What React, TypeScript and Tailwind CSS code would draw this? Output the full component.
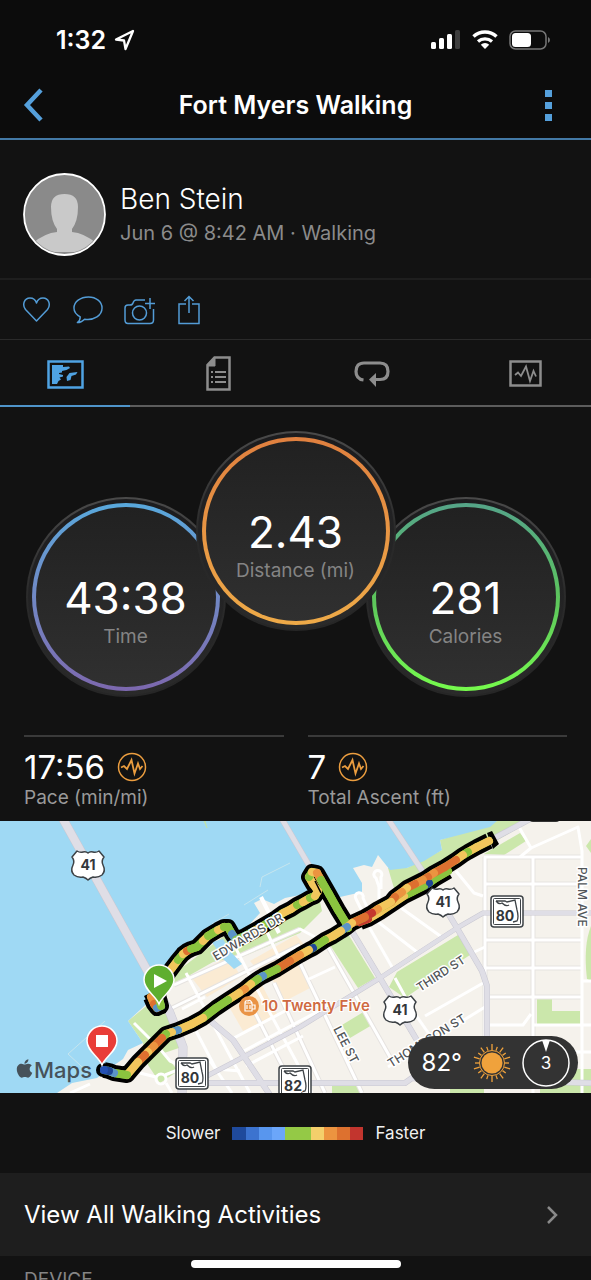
import type { ReactNode } from 'react'
import { FaApple } from 'react-icons/fa'

type SpeedKey = 'n' | 'b' | 'l' | 'g' | 'y' | 'o' | 'd' | 'r'

const SPEED: Record<SpeedKey, string> = {
  n: '#1f4696',
  b: '#3c73cf',
  l: '#5b94c8',
  g: '#8bc43f',
  y: '#f2c65c',
  o: '#ec9440',
  d: '#dd7030',
  r: '#c5382e',
}

const LEGEND = [
  'bg-[#1f4a9c]',
  'bg-[#3c73cf]',
  'bg-[#5896ee]',
  'bg-[#6ba6fa]',
  'bg-[#94c946]',
  'bg-[#94c946]',
  'bg-[#f4cf6b]',
  'bg-[#ec9440]',
  'bg-[#dd712f]',
  'bg-[#c2352e]',
]

// Each point starts a segment drawn in its own speed colour
type TrackPoint = [number, number, SpeedKey]

const TRACK_SHORE: TrackPoint[] = [
  [151, 176, 'o'], [154, 183, 'd'], [157, 187, 'l'], [161, 185, 'g'], [158, 174, 'y'],
  [164, 158, 'y'], [172, 147, 'y'], [178, 139, 'g'], [183, 133, 'y'], [187, 130, 'd'],
  [191, 128, 'g'], [197, 126, 'g'], [203, 120, 'y'], [208, 115, 'g'], [213, 112, 'g'],
  [218, 109, 'y'], [224, 106, 'g'], [228, 106, 'g'], [232, 113, 'l'], [236, 119, 'g'],
  [245, 115, 'g'], [254, 110, 'y'], [261, 106, 'g'], [276, 97, 'g'], [283, 92, 'y'],
  [291, 88, 'y'], [297, 84, 'g'], [303, 81, 'y'], [310, 77, 'g'], [315, 75, 'y'],
  [318, 70, 'y'], [313, 63, 'y'], [309, 56, 'g'], [312, 51, 'y'], [317, 52, 'o'],
  [321, 59, 'g'], [329, 73, 'g'], [338, 89, 'g'], [346, 102, 'g'], [348, 107, 'g'],
]

const TRACK_MAIN: TrackPoint[] = [
  [489, 20, 'y'], [477, 26, 'y'], [468, 31, 'g'], [463, 34, 'y'], [456, 39, 'd'],
  [445, 46, 'd'], [434, 52, 'o'], [428, 56, 'd'], [423, 59, 'o'], [415, 63, 'd'],
  [407, 67, 'y'], [402, 71, 'o'], [395, 76, 'd'], [391, 81, 'y'], [378, 88, 'o'],
  [372, 92, 'r'], [365, 96, 'd'], [352, 102, 'y'], [347, 106, 'l'], [341, 110, 'y'],
  [333, 115, 'y'], [325, 119, 'g'], [313, 127, 'n'], [309, 129, 'y'], [300, 134, 'o'],
  [290, 140, 'd'], [277, 148, 'g'], [263, 155, 'l'], [258, 158, 'g'], [251, 163, 'y'],
  [245, 168, 'o'], [239, 172, 'y'], [228, 179, 'g'], [216, 187, 'g'], [203, 197, 'y'],
  [192, 203, 'y'], [178, 209, 'l'], [172, 211, 'y'], [166, 213, 'g'], [162, 217, 'd'],
  [154, 225, 'o'], [148, 231, 'y'], [145, 234, 'd'], [138, 241, 'y'], [127, 254, 'g'],
  [114, 252, 'l'], [109, 250, 'n'], [104, 249, 'n'],
]

// Return leg that runs beside the main one for a few blocks
const TRACK_RETURN: TrackPoint[] = [
  [448, 50, 'g'], [436, 57, 'g'], [429, 62, 'n'], [424, 65, 'g'], [412, 71, 'g'],
  [404, 75, 'y'], [392, 83, 'y'], [380, 91, 'y'], [368, 98, 'r'], [360, 101, 'd'],
]

function Track({ points }: { points: TrackPoint[] }) {
  const line = points.map(([x, y]) => `${x},${y}`).join(' ')
  return (
    <g fill="none" strokeLinejoin="round">
      <polyline points={line} stroke={SPEED.g} strokeWidth="8" strokeLinecap="round" />
      {points.slice(0, -1).map(([x, y, key], i) => (
        <line
          key={i}
          x1={x}
          y1={y}
          x2={points[i + 1][0]}
          y2={points[i + 1][1]}
          stroke={SPEED[key]}
          strokeWidth="8"
          strokeLinecap="round"
        />
      ))}
    </g>
  )
}

function TrackCasing({ points }: { points: TrackPoint[] }) {
  return (
    <polyline
      points={points.map(([x, y]) => `${x},${y}`).join(' ')}
      fill="none"
      stroke="#000"
      strokeWidth="16"
      strokeLinejoin="round"
      strokeLinecap="butt"
    />
  )
}

function UsShield({ x, y }: { x: number; y: number }) {
  return (
    <g transform={`translate(${x} ${y})`}>
      <path
        d="M-11-14 Q-8-12-5-13 Q-2-14 0-12 Q2-14 5-13 Q8-12 11-14 L16-8 Q13-4 15 0 Q18 6 14 10 Q10 13 5 12 Q2 13 0 15 Q-2 13-5 12 Q-10 13-14 10 Q-18 6-15 0 Q-13-4-16-8 Z"
        fill="#fff"
        stroke="#3d4246"
        strokeWidth="1.5"
        strokeLinejoin="round"
      />
      <text y="5" textAnchor="middle" fontSize="14" fontWeight="700" fill="#33373a">
        41
      </text>
    </g>
  )
}

function StateShield({ x, y, label }: { x: number; y: number; label: string }) {
  return (
    <g transform={`translate(${x} ${y})`}>
      <rect x="-16" y="-15" width="32" height="31" rx="3" fill="#fff" stroke="#3d4246" strokeWidth="1.5" />
      <rect x="-13.500" y="-12.500" width="27" height="26" rx="1" fill="none" stroke="#3d4246" />
      <path d="M-11-10 H-2 L0-9 L8-11 L10-1 Q12 6 10 10 L6 11 M-11-10 Q-8-6-5-8 Q-1-4 2-6" fill="none" stroke="#3d4246" strokeWidth="1.3" />
      <text x="-2" y="10" textAnchor="middle" fontSize="14" fontWeight="700" fill="#33373a" stroke="#fff" strokeWidth="2" paintOrder="stroke">
        {label}
      </text>
    </g>
  )
}

function Pin({ x, y, color, children }: { x: number; y: number; color: string; children: ReactNode }) {
  return (
    <g transform={`translate(${x} ${y})`}>
      <path
        d="M0 23 C-3 15-15 9-15-1 A15 15 0 0 1 15-1 C15 9 3 15 0 23 Z"
        fill={color}
        stroke="#fff"
        strokeWidth="1.5"
      />
      {children}
    </g>
  )
}

function RouteMap() {
  return (
    <svg viewBox="0 0 591 272" preserveAspectRatio="xMidYMid slice" className="block h-full w-full" role="img" aria-label="Route map">
      <rect width="591" height="272" fill="#f5f2ec" />

      {/* Built-up blocks */}
      <g fill="#fbebd3">
        <path d="M191 156 L229 135 L241 156 L207 176 Z" />
        <path d="M250 140 L296 114 L308 128 L262 154 Z" />
        <path d="M228 184 L262 164 L277 193 L243 210 Z" />
        <path d="M272 158 L300 142 L312 166 L285 180 Z" />
      </g>

      {/* Parks */}
      <g fill="#cbe7ab">
        <path d="M497 0 L440 19 L442 29 L407 47 L388 47 L396 74 L489 24 L530 0 Z" />
        <path d="M484 33 L520 12 L526 20 L504 34 Z" />
        <path d="M167 158 L228 112 L300 84 L318 72 L322 90 L300 112 L247 134 L213 141 L176 162 Z" />
        <path d="M128 200 L150 182 L172 196 L182 226 L164 232 L178 250 L160 262 L148 244 L143 222 Z" />
        <path d="M330 124 L348 113 L375 157 L358 167 Z" />
        <path d="M397 151 L458 114 L473 132 L418 168 L405 177 L389 166 Z" />
        <path d="M342 204 L365 190 L372 204 L350 217 Z" />
        <path d="M537 178 H552 V190 H580 V203 H537 Z" />
        <path d="M586 25 L591 18 V32 Z" />
        <path d="M591 105 Q583 125 587 158 L591 160 Z" />
        <path d="M332 264 H361 V272 H332 Z M450 264 H484 V272 H450 Z M540 248 H591 V272 H540 Z" />
      </g>

      {/* River */}
      <path
        d="M0 0 H497 L490 6 L440 19 L442 29 L424 40 L407 47 L390 49 L378 34 L372 46 L364 44 L353 47 L362 62 L362 71 L340 76 L322 72 L300 74 L285 77 L274 83 L262 78 L254 82 L260 92 L238 116 L226 102 L196 122 L167 146 L152 178 L128 200 L143 222 L128 229 L123 238 L113 245 L97 257 L72 262 L57 272 H0 Z"
        fill="#9fd9f4"
      />
      <path d="M204 0 L207 7 L205 0 Z" fill="#cbe7ab" stroke="#bfe2b0" />
      <path d="M212 103 L229 93 M244 84 L268 69 M262 56 L290 42 M105 200 L68 233 L92 255 M262 56 L260 66" fill="none" stroke="#c6e5ee" strokeWidth="1" />
      <path d="M261 76 L279 112" fill="none" stroke="#fff" strokeWidth="4" />

      {/* Side streets */}
      <g fill="none" stroke="#e6e3e0" strokeWidth="5" strokeLinejoin="round">
        <path d="M174 164 L300 108 M172 187 L300 124 M485 36 V216 M533 36 V264 M484 36 H582 M484 63 H582 M485 119 H582 M485 147 H582 M490 176 H582" />
        <path d="M248 178 L296 272 M274 162 L325 272 M300 142 L362 272 M328 126 L390 236" />
      </g>
      <g fill="none" stroke="#fff" strokeWidth="3" strokeLinejoin="round">
        <path d="M174 164 L300 108 L315 116 M172 187 L300 124 M186 152 L222 220 L250 272 M232 120 L250 155 L296 240 L312 272 M262 100 L285 150 M205 176 L182 188" />
        <path d="M248 178 L296 272 M274 162 L325 272 M300 142 L362 272 M328 126 L390 236" />
        <path d="M373 97 L417 131 M397 84 L443 117 M232 218 L300 182 M240 232 L330 184 M246 245 L303 215" />
        <path d="M368 104 L392 146 M395 157 L413 190 L445 236 M309 158 L335 146 M472 132 L485 126 M425 195 L485 161 M388 246 L485 186" />
        <path d="M381 68 V56 A4 4 0 1 0 376 57 L379 66 V78 M366 98 L356 78 A4 4 0 1 1 363 77 L367 86" />
        <path d="M456 50 L474 72 L483 75 M484 36 H582 M484 63 H582 M485 119 H582 M485 147 H582 M490 176 H582 M490 204 H523 L531 193" />
        <path d="M485 36 V216 M533 36 V272 M519 6 L531 27 L578 6 L582 30 V272 M531 27 L520 36 M533 204 H591 M582 160 H591 M555 231 H591" />
        <path d="M134 202 L160 228 L170 240 L182 245 M140 252 L156 256 M166 262 L172 272 M165 254 L180 248 M70 272 L90 263" />
        <circle cx="161" cy="258" r="5" />
        <path d="M210 240 L232 272 M186 236 L206 262 M196 210 L216 248 L240 250" />
      </g>
      <path d="M212 121 L223 118 L231 131 L242 143 L234 148 L222 137 Z" fill="#9fd9f4" />

      {/* Main roads */}
      <g fill="none" stroke="#c9c8d2" strokeLinejoin="round">
        <path d="M63 -2 L147 149 L170 192 L183 226 L182 274" strokeWidth="9" />
        <path d="M282 -2 L310 46 L350 107 L380 157 L418 221 L428 240" strokeWidth="6" />
        <path d="M388 -2 L423 51 L457 107 L482 150 L487 165 V240" strokeWidth="6" />
        <path d="M182 268 L230 243 L300 206 L380 157 L457 107 L483 92 H591" strokeWidth="5" />
        <path d="M207 197 L233 219 L270 274 M185 262 H405 L412 257 L591 262" strokeWidth="6" />
        <path d="M489 20 L530 -2" strokeWidth="6" />
      </g>
      <g fill="none" stroke="#dfdee6" strokeLinejoin="round">
        <path d="M63 -2 L147 149 L170 192 L183 226 L182 274" strokeWidth="8" />
        <path d="M282 -2 L310 46 L350 107 L380 157 L418 221 L428 240" strokeWidth="5" />
        <path d="M388 -2 L423 51 L457 107 L482 150 L487 165 V240" strokeWidth="5" />
        <path d="M182 268 L230 243 L300 206 L380 157 L457 107 L483 92 H591" strokeWidth="4" />
        <path d="M207 197 L233 219 L270 274 M185 262 H405 L412 257 L591 262" strokeWidth="5" />
        <path d="M489 20 L530 -2" strokeWidth="5" />
      </g>

      <TrackCasing points={TRACK_SHORE} />
      <TrackCasing points={TRACK_MAIN} />
      <TrackCasing points={TRACK_RETURN} />
      <path d="M487 12 L492 10 L499 23 L493 28 Z" />
      <path d="M144 175 L150 172 L158 174 L158 182 L166 183 L166 192 L154 195 Z" />
      <circle cx="103" cy="249" r="7" />
      <Track points={TRACK_RETURN} />
      <Track points={TRACK_SHORE} />
      <Track points={TRACK_MAIN} />
      <circle cx="429" cy="62" r="3" fill={SPEED.n} />
      <path d="M315 60 L321 72" stroke="#000" strokeWidth="1.5" />
      <circle cx="104" cy="249" r="4" fill="#2450b4" />

      {/* Street names */}
      <g fontSize="12" fill="#515558" stroke="#fff" strokeWidth="3" paintOrder="stroke" strokeLinejoin="round" fontWeight="500">
        <text transform="translate(216 140) rotate(-31)">EDWARDS DR</text>
        <text transform="translate(420 171) rotate(-33)">THIRD ST</text>
        <text transform="translate(391 247) rotate(-32)">THOMPSON ST</text>
        <text transform="translate(333 208) rotate(62)">LEE ST</text>
        <text transform="translate(578 46) rotate(90)">PALM AVE</text>
      </g>

      <UsShield x={88} y={44} />
      <UsShield x={443} y={81} />
      <UsShield x={400} y={189} />
      <StateShield x={507} y={90} label="80" />
      <StateShield x={192} y={252} label="80" />
      <StateShield x={295} y={260} label="82" />

      {/* Point of interest */}
      <circle cx="249" cy="185" r="10" fill="#e99345" />
      <path d="M245 182 h7 v8 h-7 Z M252 184 h3 v4 h-3 M245 182 q0-3 3-2 q2-2 4 2 M247 184 v4 M250 184 v4" fill="none" stroke="#fff" strokeWidth="1.2" />
      <text x="262" y="190" fontSize="15" fontWeight="600" fill="#cf6a42" stroke="#fff" strokeWidth="2" paintOrder="stroke">
        10 Twenty Five
      </text>

      <Pin x={159} y={160} color="#5fae2f">
        <path d="M-5-7 L8 0 L-5 7 Z" fill="#fff" />
      </Pin>
      <Pin x={102} y={221} color="#e93d38">
        <rect x="-6" y="-7" width="12" height="12" fill="#fff" />
      </Pin>

      <FaApple x="14" y="237" size={21} color="#46525a" />
      <text x="34" y="257" fontSize="22" fontWeight="500" fill="#46525a">
        Maps
      </text>
      <rect x="529" y="-8" width="31" height="9" rx="4" fill="#333" />
    </svg>
  )
}

function PulseIcon() {
  return (
    <svg width="30" height="30" viewBox="0 0 30 30" fill="none" stroke="#eb9d3f" aria-hidden="true">
      <circle cx="15" cy="15" r="13.500" strokeWidth="1.500" />
      <path d="M4 15.500 L7 14 L10 17 L14.500 8 L17.500 21.500 L21 11.500 L23 17 L25.500 14" strokeWidth="1.800" />
    </svg>
  )
}

function StatusBar() {
  return (
    <div className="flex h-[70px] items-center justify-between pt-[10px] pr-10 pl-14 text-white">
      <div className="flex items-center gap-2">
        <span className="text-[25px] leading-8 font-semibold">1:32</span>
        <svg width="21" height="22" viewBox="0 0 21 22" fill="none" aria-hidden="true">
          <path d="M19 2 L2 10.500 L10 11.500 L11.500 20 Z" stroke="#fff" strokeWidth="2.300" strokeLinejoin="round" />
        </svg>
      </div>
      <div className="flex items-center gap-[11px]">
        <svg width="30" height="20" viewBox="0 0 30 20" fill="#fff" aria-hidden="true">
          <rect x="0" y="12" width="5" height="7" rx="1.500" />
          <rect x="8" y="8" width="5" height="11" rx="1.500" />
          <rect x="16" y="4" width="5" height="15" rx="1.500" />
          <rect x="24" y="0" width="5" height="19" rx="1.500" fill="#3d3d3d" />
        </svg>
        <svg width="26" height="20" viewBox="0 0 26 20" fill="none" stroke="#fff" aria-hidden="true">
          <path d="M1.500 6.500 A17 17 0 0 1 24.500 6.500" strokeWidth="3.500" />
          <path d="M6 11.500 A10.500 10.500 0 0 1 20 11.500" strokeWidth="3.200" />
          <path d="M13 19 L8.800 14.800 A6 6 0 0 1 17.200 14.800 Z" fill="#fff" stroke="none" />
        </svg>
        <svg width="42" height="20" viewBox="0 0 42 20" fill="none" aria-hidden="true">
          <rect x="1" y="1" width="36" height="18" rx="5.500" stroke="#777" strokeWidth="1.500" />
          <rect x="3" y="3" width="19" height="14" rx="3.500" fill="#fff" />
          <path d="M39 7 Q41 8 41 10 Q41 12 39 13 Z" fill="#777" />
        </svg>
      </div>
    </div>
  )
}

function Header() {
  return (
    <header className="border-b-2 border-[#4379a6] bg-[#0c0c0c]">
      <StatusBar />
      <div className="flex h-[68px] items-center justify-between px-[22px] pt-[2px]">
        <button type="button" aria-label="Back" className="flex w-[42px] justify-start">
          <svg width="24" height="34" viewBox="0 0 24 34" fill="none">
            <path d="M19 2 L5 17 L19 32" stroke="#55a0dc" strokeWidth="4.500" />
          </svg>
        </button>
        <h1 className="text-[25px] leading-8 font-semibold text-white">Fort Myers Walking</h1>
        <button type="button" aria-label="More options" className="flex w-[42px] flex-col items-center gap-[5px]">
          <span className="size-[7px] bg-[#55a0dc]" />
          <span className="size-[7px] bg-[#55a0dc]" />
          <span className="size-[7px] bg-[#55a0dc]" />
        </button>
      </div>
    </header>
  )
}

function Profile() {
  return (
    <section className="flex h-[140px] items-center gap-[14px] border-b-2 border-[#1e1e1e] px-[23px] pt-[10px]">
      <svg width="83" height="83" viewBox="0 0 83 83" className="shrink-0" role="img" aria-label="Profile picture">
        <defs>
          <clipPath id="avatar">
            <circle cx="41.500" cy="41.500" r="39" />
          </clipPath>
        </defs>
        <circle cx="41.500" cy="41.500" r="40.500" fill="#8a8a8a" stroke="#fff" strokeWidth="1.800" />
        <g clipPath="url(#avatar)" fill="#c9c9c9">
          <path d="M28 34 Q28 21 41.500 21 Q55 21 55 34 Q55 48 49 56 L49 59 Q61 60 73 70 L62 79 H21 L10 70 Q22 60 34 59 L34 56 Q28 48 28 34 Z" />
        </g>
      </svg>
      <div className="pt-[2px]">
        <p className="text-[28px] leading-9 font-light text-white">Ben Stein</p>
        <p className="text-xl leading-8 text-[#8b8b8b]">Jun 6 @ 8:42 AM · Walking</p>
      </div>
    </section>
  )
}

function Actions() {
  return (
    <div className="flex h-[60px] items-center gap-[21px] border-b border-[#2a2a2a] px-[22px] text-[#539cd6]">
      <button type="button" aria-label="Like">
        <svg width="30" height="30" viewBox="0 0 30 30" fill="none" stroke="currentColor" strokeWidth="1.500">
          <path d="M14.500 26 L3.500 14.500 C0 10 2 3 8 3 C11 3 13.500 5 14.500 8 C15.500 5 18 3 21 3 C27 3 29 10 25.500 14.500 Z" strokeLinejoin="round" />
        </svg>
      </button>
      <button type="button" aria-label="Comment">
        <svg width="30" height="30" viewBox="0 0 31 30" fill="none" stroke="currentColor" strokeWidth="1.500">
          <path d="M16 1.500 C7.500 1.500 1 6.500 1 13 C1 17 3.500 20 7.500 22 C7.500 25 6 27 4.500 28 C8 28 10.500 26 12 24.500 C22 26 30 20.500 30 13 C30 6.500 24 1.500 16 1.500 Z" strokeLinejoin="round" />
        </svg>
      </button>
      <button type="button" aria-label="Add photo">
        <svg width="31" height="30" viewBox="0 0 31 30" fill="none" stroke="currentColor" strokeWidth="1.500">
          <path d="M21 5 H12 Q10 5 9 8 Q8.500 10 6 10 H4 Q1 10 1 13 V25 Q1 28.500 4 28.500 H26 Q29.500 28.500 29.500 25 V14" />
          <circle cx="15.500" cy="18" r="7" />
          <path d="M26 3 V14 M21 8.500 H31" />
        </svg>
      </button>
      <button type="button" aria-label="Share">
        <svg width="26" height="30" viewBox="2 0 26 30" fill="none" stroke="currentColor" strokeWidth="1.500">
          <path d="M12 9 H5 V28.500 H25 V9 H18" />
          <path d="M15 18 V1.500 M10.500 6 L15 1.500 L19.500 6" />
        </svg>
      </button>
    </div>
  )
}

function Tabs() {
  const tab = 'flex w-[22%] items-center justify-center border-b-2 pt-1'
  return (
    <div role="tablist" className="flex h-[67px] justify-between border-b-2 border-[#5c5c5c] text-[#8d8d8d]">
      <button type="button" role="tab" aria-selected="true" aria-label="Overview" className={`${tab} -mb-[2px] border-[#4f94c9] text-[#4fa3e3]`}>
        <svg width="37" height="29" viewBox="0 0 37 29">
          <path d="M1.500 1.500 H35.500 V27.500 H1.500 Z" fill="none" stroke="currentColor" strokeWidth="2.500" />
          <path
            d="M5 5 H16 V7 L22 6.500 L23 8 L19.500 10 L15 11 V12.500 L12 13 V14 L16 15 V16.500 L12.500 17.500 L14 19.500 L11.500 21 L10 24 H5 Z M30.500 12 L29 14.500 L24.500 16 L23.500 20 L20 21 L19.500 17 L22.500 13 Z"
            fill="currentColor"
          />
        </svg>
      </button>
      <button type="button" role="tab" aria-selected="false" aria-label="Stats" className={`${tab} border-transparent`}>
        <svg width="25" height="35" viewBox="0 0 25 35" fill="none" stroke="currentColor">
          <path d="M8.500 1.500 H23.500 V33.500 H1.500 V9 Z" strokeWidth="2.500" />
          <path d="M9 1 V10 H1 Z" fill="currentColor" />
          <path d="M9 16 H20 M9 21 H20 M9 26 H20" strokeWidth="2" />
          <path d="M5 16 H7 M5 21 H7 M5 26 H7" strokeWidth="2" />
        </svg>
      </button>
      <button type="button" role="tab" aria-selected="false" aria-label="Laps" className={`${tab} border-transparent`}>
        <svg width="36" height="26" viewBox="0 0 36 26" fill="none" stroke="currentColor" strokeWidth="3.200">
          <path d="M9.500 19 Q2 18 2 10.500 Q2 2 10 2 H26 Q34 2 34 10.500 Q34 18.500 26 18.500 H20" />
          <path d="M22 12 V26 L15 18.500 Z" fill="currentColor" stroke="none" />
        </svg>
      </button>
      <button type="button" role="tab" aria-selected="false" aria-label="Charts" className={`${tab} border-transparent`}>
        <svg width="33" height="27" viewBox="0 0 33 27" fill="none" stroke="currentColor">
          <path d="M1.500 1.500 H31.500 V25.500 H1.500 Z" strokeWidth="2.500" />
          <path d="M6 15 L9 12.500 L12 16 L17 6.500 L21 21 L24.500 11 L27 16.500" strokeWidth="1.800" />
        </svg>
      </button>
    </div>
  )
}

interface GaugeProps {
  value: string
  label: string
  ring: string
  className?: string
}

function Gauge({ value, label, ring, className = '' }: GaugeProps) {
  return (
    <div className={`size-[200px] shrink-0 rounded-full bg-linear-to-b from-[#4a4a4a] via-[#2a2a2a] to-[#262626] p-[2px] ${className}`}>
      <div className="size-full rounded-full bg-linear-to-b from-[#1c1c1e] to-[#2a2a2a] p-1">
        <div className={`size-full rounded-full bg-linear-to-b p-1 ${ring}`}>
          <div className="flex size-full flex-col items-center rounded-full bg-linear-to-b from-[#212121] to-[#303030] pt-16">
            <span className="text-[44px] leading-[54px] text-white">{value}</span>
            <span className="text-[19px] leading-6 text-[#848484]">{label}</span>
          </div>
        </div>
      </div>
    </div>
  )
}

function Stat({ value, label }: { value: string; label: string }) {
  return (
    <div className="border-t-2 border-[#3a3a3a] pt-[10px]">
      <div className="flex items-center gap-3">
        <span className="text-[33px] leading-10 text-white">{value}</span>
        <PulseIcon />
      </div>
      <p className="text-[19px] leading-[22px] text-[#9a9a9a]">{label}</p>
    </div>
  )
}

function WeatherPill() {
  const rays = Array.from({ length: 20 }, (_, i) => i * 18)
  return (
    <div className="absolute right-[13px] bottom-1 flex h-[53px] items-center gap-[10px] rounded-full bg-[#333] pr-2 pl-[14px] text-white">
      <span className="text-2xl">82°</span>
      <svg width="40" height="40" viewBox="-20 -20 40 40" aria-hidden="true">
        <circle r="10.500" fill="#f0a23c" />
        <circle r="12.500" fill="none" stroke="#f0a23c" />
        {rays.map(a => (
          <line key={a} x1="0" y1="-13" x2="0" y2={a % 36 ? -17 : -19} stroke="#f0a23c" strokeWidth="1.300" transform={`rotate(${a})`} />
        ))}
      </svg>
      <svg width="48" height="48" viewBox="-24 -24 48 48" role="img" aria-label="Wind 3">
        <circle r="23" fill="none" stroke="#fff" strokeWidth="1.500" />
        <path d="M-4-23 H4 L0-11 Z" fill="#fff" />
        <text y="6" textAnchor="middle" fontSize="17" fill="#fff">
          3
        </text>
      </svg>
    </div>
  )
}

export default function App() {
  return (
    <div className="relative h-screen overflow-hidden bg-[#121212] font-['Inter','Liberation_Sans',sans-serif]">
      <Header />
      <main>
        <Profile />
        <Actions />
        <Tabs />
        <section className="flex justify-center pt-6">
          <Gauge value="43:38" label="Time" ring="from-[#58a8dc] to-[#7c68ae]" className="mt-[66px]" />
          <Gauge value="2.43" label="Distance (mi)" ring="from-[#e0803f] to-[#eeaa48]" className="relative -mx-[30px]" />
          <Gauge value="281" label="Calories" ring="from-[#55a488] via-[#5cc45c] to-[#76fb4c]" className="mt-[66px]" />
        </section>
        <section className="grid grid-cols-2 gap-6 px-6 pt-[38px] pb-3">
          <Stat value="17:56" label="Pace (min/mi)" />
          <Stat value="7" label="Total Ascent (ft)" />
        </section>
        <section className="relative h-[272px]">
          <RouteMap />
          <WeatherPill />
        </section>
        <div className="flex h-20 items-center justify-center gap-3 text-[17px] leading-6 text-[#f0f0f0]">
          <span>Slower</span>
          <div className="flex h-[13px] w-[131px]">
            {LEGEND.map((color, i) => (
              <span key={i} className={`flex-1 ${color}`} />
            ))}
          </div>
          <span>Faster</span>
        </div>
        <a href="#activities" className="flex h-[83px] items-center justify-between bg-[#1e1e1e] pr-8 pl-6 text-white">
          <span className="text-2xl">View All Walking Activities</span>
          <svg width="14" height="20" viewBox="0 0 14 20" fill="none" aria-hidden="true">
            <path d="M3 2 L11 10 L3 18" stroke="#8a8a8a" strokeWidth="2.500" />
          </svg>
        </a>
        <h2 className="px-6 pt-3 text-[19px] leading-6 text-[#858585]">DEVICE</h2>
      </main>
      <div className="fixed inset-x-0 bottom-3 flex justify-center">
        <span className="h-2 w-[210px] rounded-full bg-white" />
      </div>
    </div>
  )
}
